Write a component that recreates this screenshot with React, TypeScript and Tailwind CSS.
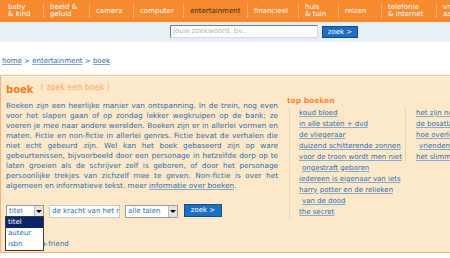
import React from "react";

const nav = [
  { l1: "baby", l2: "& kind", w: "w-[41px]" },
  { l1: "beeld &", l2: "geluid", w: "w-[45px]" },
  { l1: "camera", w: "w-[43px]" },
  { l1: "computer", w: "w-[49px]" },
  { l1: "entertainment", w: "w-[63px]", active: true },
  { l1: "financieel", w: "w-[50px]" },
  { l1: "huis", l2: "& tuin", w: "w-[39px]" },
  { l1: "reizen", w: "w-[42px]" },
  { l1: "telefonie", l2: "& internet", w: "w-[54px]" },
  { l1: "vrij", l2: "aanbod", w: "w-[50px]" },
];

const topLeft = [
  { t: "koud bloed" },
  { t: "in alle staten + dvd" },
  { t: "de vliegeraar" },
  { t: "duizend schitterende zonnen" },
  { t: "voor de troon wordt men niet" },
  { t: "ongestraft geboren", indent: true },
  { t: "iedereen is eigenaar van iets" },
  { t: "harry potter en de relieken" },
  { t: "van de dood", indent: true },
  { t: "the secret" },
];

const topRight = [
  { t: "het zijn net mensen" },
  { t: "de bosatlas" },
  { t: "hoe overleef ik" },
  { t: "vriendenboek", indent: true },
  { t: "het slimme boek" },
];

function Link({ t, indent }: { t: string; indent?: boolean }) {
  return (
    <div className={`h-[11px] leading-[11px] whitespace-nowrap ${indent ? "pl-[3px]" : ""}`}>
      <span className="text-[#2a6bb0] underline decoration-[#86a9cc] underline-offset-[1px]">{t}</span>
    </div>
  );
}

function Arrow() {
  return (
    <div className="flex h-full w-[9px] items-center justify-center border-l border-[#b8b8b8] bg-[#e4e4e4]">
      <div className="h-0 w-0 border-x-[3px] border-t-[3px] border-x-transparent border-t-black" />
    </div>
  );
}

export default function App() {
  return (
    <div className="relative h-[258px] w-[450px] overflow-hidden bg-white font-['DejaVu_Sans',sans-serif] text-[7px]">
      {/* top navigation */}
      <div className="flex h-[22px] items-center bg-[#f7892f] pl-[2px]">
        {nav.map((n, i) => (
          <div key={i} className="flex items-center">
            {i > 0 && <div className="h-[14px] w-px bg-[#fbae72]" />}
            <div
              className={`flex ${n.w} flex-col justify-center pl-[6px] leading-[7px] ${
                n.active ? "text-[#3a2a1a]" : "text-white"
              }`}
            >
              <span>{n.l1}</span>
              {n.l2 && <span>{n.l2}</span>}
            </div>
          </div>
        ))}
      </div>

      {/* search bar */}
      <div className="flex h-[20px] items-start bg-[#e7eef6] pl-[170px] pt-[3px]">
        <div className="flex h-[13px] w-[148px] items-center border border-[#7a7a7a] border-b-[#d8d8d8] border-r-[#d8d8d8] bg-white pl-[2px] text-[#b5b5b5]">
          jouw zoekwoord, bv.:
        </div>
        <div className="ml-[4px] mt-px flex h-[12px] w-[36px] items-center justify-center border border-[#0e4f91] bg-[#1f6fc0] text-white">
          zoek &gt;
        </div>
      </div>

      {/* breadcrumb */}
      <div className="mt-[14px] pl-[2px] text-[#2a6bb0]">
        <span className="underline decoration-[#86a9cc]">home</span> &gt;{" "}
        <span className="underline decoration-[#86a9cc]">entertainment</span> &gt;{" "}
        <span className="underline decoration-[#86a9cc]">boek</span>
      </div>

      {/* main panel */}
      <div className="mt-[8px] h-[178px] border border-r-0 border-[#f9b07a]">
        <div className="h-full border-t border-white bg-[#fde9c9]">
          <div className="flex">
            <div className="w-[281px] pl-[5px]">
              <div className="flex h-[20px] items-end">
                <span className="text-[10px] font-bold leading-[14px] text-[#f47a22]">boek</span>
                <span className="ml-[7px] pb-[3px] text-[8px] text-[#f8a868]">( zoek een boek )</span>
              </div>
              <p className="mt-[4px] w-[272px] text-justify text-[7.3px] leading-[10px] text-[#2a6bb0]">
                Boeken zijn een heerlijke manier van ontspanning. In de trein, nog even voor het slapen gaan of op
                zondag lekker wegkruipen op de bank; ze voeren je mee naar andere werelden. Boeken zijn er in
                allerlei vormen en maten. Fictie en non-fictie in allerlei genres. Fictie bevat de verhalen die niet
                echt gebeurd zijn. Wel kan het boek gebaseerd zijn op ware gebeurtenissen, bijvoorbeeld door een
                personage in hetzelfde dorp op te laten groeien als de schrijver zelf is geboren, of door het
                personage persoonlijke trekjes van zichzelf mee te geven. Non-fictie is over het algemeen en
                informatieve tekst. meer{" "}
                <span className="underline decoration-[#86a9cc]">informatie over boeken</span>.
              </p>

              {/* search form */}
              <div className="mt-[14px] flex items-start">
                <div className="flex h-[13px] w-[38px] items-stretch border border-[#9a9a9a] bg-white">
                  <span className="flex-1 pl-[2px] leading-[11px] text-[#2a6bb0]">titel</span>
                  <Arrow />
                </div>
                <div className="ml-[5px] flex h-[13px] w-[71px] items-center overflow-hidden whitespace-nowrap border border-[#c8c8c8] bg-white pl-[2px] text-[#2a6bb0]">
                  de kracht van het n
                </div>
                <div className="ml-[5px] flex h-[13px] w-[53px] items-stretch border border-[#9a9a9a] bg-white">
                  <span className="flex-1 pl-[2px] leading-[11px] text-[#2a6bb0]">alle talen</span>
                  <Arrow />
                </div>
                <div className="ml-[6px] -mt-px flex h-[13px] w-[38px] items-center justify-center border border-[#0e4f91] bg-[#1f6fc0] text-white">
                  zoek &gt;
                </div>
              </div>

              <div className="mt-[22px] pl-[22px] leading-[9px] text-[#2a6bb0]">tell-a-friend</div>
            </div>

            {/* top boeken */}
            <div className="pl-[9px] pt-[20px]">
              <div className="text-[7.5px] font-bold leading-[8px] text-[#f68a3a]">top boeken</div>
              <div className="mt-[2px] flex">
                <div className="ml-[2px] w-[116px] border-l border-[#e2d5c3] pl-[9px] pb-[2px] pt-[1px]">
                  {topLeft.map((l, i) => (
                    <Link key={i} t={l.t} indent={l.indent} />
                  ))}
                </div>
                <div className="h-[54px] border-l border-[#e2d5c3] pl-[10px] pt-[1px]">
                  {topRight.map((l, i) => (
                    <Link key={i} t={l.t} indent={l.indent} />
                  ))}
                </div>
              </div>
            </div>
          </div>
        </div>
      </div>

      {/* opened select list */}
      <div className="absolute left-[5px] top-[216px] w-[39px] border border-[#3c3c3c] bg-white">
        <div className="h-[11px] bg-[#0a246a] pl-[2px] leading-[11px] text-white">titel</div>
        <div className="h-[11px] pl-[2px] leading-[11px] text-[#2a6bb0]">auteur</div>
        <div className="h-[11px] pl-[2px] leading-[11px] text-[#2a6bb0]">isbn</div>
      </div>
    </div>
  );
}
